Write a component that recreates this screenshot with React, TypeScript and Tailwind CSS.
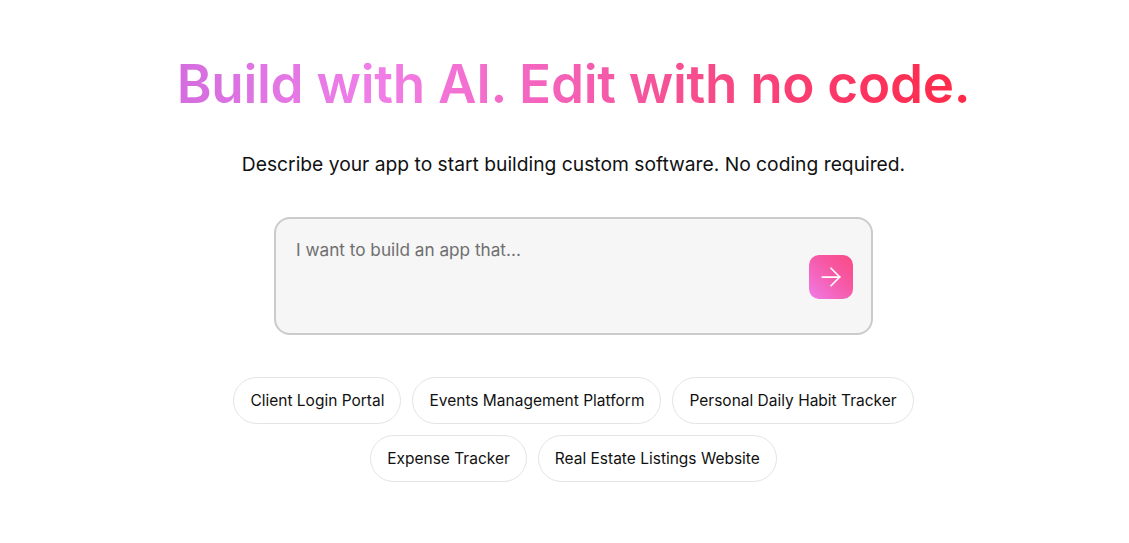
import { ArrowRight } from 'lucide-react';

const suggestions = [
  ['Client Login Portal', 'Events Management Platform', 'Personal Daily Habit Tracker'],
  ['Expense Tracker', 'Real Estate Listings Website'],
];

export default function App() {
  return (
    <div className="min-h-screen bg-white font-['Inter',sans-serif] text-[#111111]">
      <div className="flex flex-col items-center pl-[18px] pt-[52px]">
        <h1 className="bg-[linear-gradient(90deg,#d46ddf_0%,#f07fe8_25%,#f465c0_45%,#f64e8e_65%,#fc3563_85%,#ff2946_100%)] bg-clip-text text-[53px] font-semibold leading-[64px] tracking-[-0.3px] text-transparent">
          Build with AI. Edit with no code.
        </h1>

        <p className="mt-[34px] text-[19.25px] leading-[28px] text-[#111111]">
          Describe your app to start building custom software. No coding required.
        </p>

        <div className="mt-[39px] flex h-[118px] w-[599px] items-start justify-between rounded-[16px] border-2 border-[#cbcbcb] bg-[#f6f6f6] pl-[20px] pr-[18px] pt-[18px]">
          <span className="text-[17.2px] leading-[26px] text-[#6f6f6f]">I want to build an app that...</span>
          <button className="mt-[18px] flex h-[44px] w-[44px] items-center justify-center rounded-[10px] bg-[linear-gradient(45deg,#ef7ce8_0%,#f65aa8_55%,#fa4a85_100%)] text-white">
            <ArrowRight className="h-[30px] w-[30px]" strokeWidth={1.4} />
          </button>
        </div>

        <div className="mt-[42px] flex flex-col items-center gap-[11px]">
          {suggestions.map((row, i) => (
            <div key={i} className="flex gap-[11px]">
              {row.map((s) => (
                <button
                  key={s}
                  className="h-[47px] rounded-full border border-[#e4e4e4] bg-white px-[16px] text-[15.5px] text-[#111111]"
                >
                  {s}
                </button>
              ))}
            </div>
          ))}
        </div>
      </div>
    </div>
  );
}
